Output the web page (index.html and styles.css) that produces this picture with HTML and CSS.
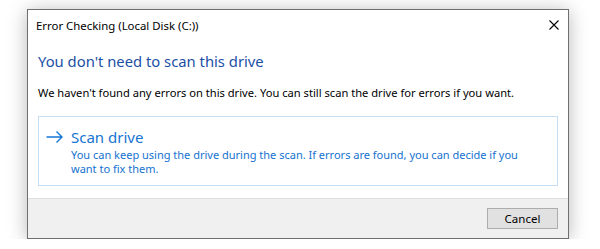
FILE: index.html
```html
<!DOCTYPE html>
<html lang="en">
<head>
    <meta charset="UTF-8">
    <title>Error Checking (Local Disk (C:))</title>
    <link rel="stylesheet" href="styles.css">
</head>
<body>
    <div class="janela">
        <div class="titulo">
            <span class="titulo-texto">Error Checking (Local Disk (C:))</span>
            <svg class="fechar" viewBox="0 0 10 10" xmlns="http://www.w3.org/2000/svg">
                <path d="M0.5 0.5 L9.5 9.5 M9.5 0.5 L0.5 9.5" stroke="#000" stroke-width="1.1" fill="none"/>
            </svg>
        </div>

        <div class="conteudo">
            <p class="instrucao">You don't need to scan this drive</p>
            <p class="mensagem">We haven't found any errors on this drive. You can still scan the drive for errors if you want.</p>

            <div class="opcao">
                <svg class="seta" viewBox="0 0 17 12" xmlns="http://www.w3.org/2000/svg">
                    <path d="M0.5 6 H16 M10.5 0.5 L16 6 L10.5 11.5" stroke="#1577d6" stroke-width="1.4" fill="none"/>
                </svg>
                <div class="opcao-textos">
                    <p class="opcao-titulo">Scan drive</p>
                    <p class="opcao-desc">You can keep using the drive during the scan. If errors are found, you can decide if you<br>want to fix them.</p>
                </div>
            </div>
        </div>

        <div class="rodape">
            <button class="botao">Cancel</button>
        </div>
    </div>
</body>
</html>
```

FILE: styles.css
```css
body {
    margin: 0;
    padding: 9px 0 0 27px;
    background-color: #ffffff;
    font-family: 'Noto Sans', sans-serif;
}

p {
    margin: 0;
}

.janela {
    width: 540px;
    background-color: #ffffff;
    border: 1px solid #6f6f6f;
    box-shadow: 0 2px 18px rgba(0, 0, 0, 0.28);
}

.titulo {
    height: 30px;
    display: flex;
    align-items: center;
    justify-content: space-between;
    padding: 0 9px 0 8px;
}

.titulo-texto {
    font-size: 11.4px;
    color: #000000;
}

.fechar {
    width: 10px;
    height: 10px;
}

.conteudo {
    padding: 11px 10px 12px 10px;
}

.instrucao {
    font-size: 14.8px;
    line-height: 20px;
    color: #1c4fa6;
}

.mensagem {
    font-size: 11.15px;
    line-height: 16px;
    color: #000000;
    margin-top: 14px;
}

.opcao {
    margin-top: 15px;
    border: 1px solid #c6def3;
    display: flex;
    gap: 8px;
    padding: 9px 10px 9px 7px;
}

.seta {
    width: 17px;
    height: 12px;
    margin-top: 5px;
    flex-shrink: 0;
}

.opcao-titulo {
    font-size: 15px;
    line-height: 22px;
    color: #1674d2;
}

.opcao-desc {
    font-size: 11px;
    line-height: 14px;
    color: #1472cf;
    white-space: nowrap;
}

.rodape {
    border-top: 1px solid #dfdfdf;
    background-color: #f0f0f0;
    height: 40px;
    display: flex;
    justify-content: flex-end;
    align-items: flex-start;
    padding: 9px 10px 0 0;
    box-sizing: border-box;
}

.botao {
    width: 71px;
    height: 21px;
    background-color: #e1e1e1;
    border: 1px solid #adadad;
    font-family: 'Noto Sans', sans-serif;
    font-size: 11.5px;
    color: #000000;
    padding: 0;
}
```
